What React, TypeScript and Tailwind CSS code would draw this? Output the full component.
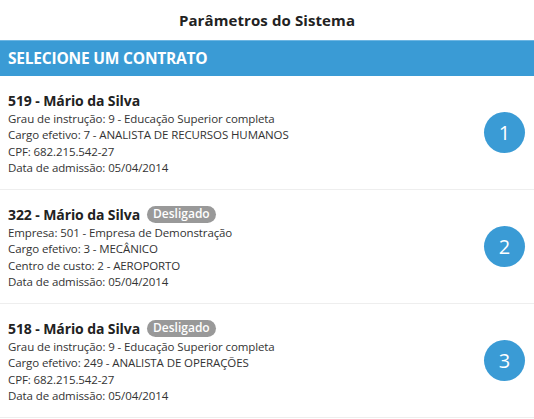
import React from "react";

const font = { fontFamily: '"Open Sans", "Noto Sans", sans-serif' };

type Item = { id: string; off?: boolean; lines: string[]; n: number };

const items: Item[] = [
  {
    id: "519",
    n: 1,
    lines: [
      "Grau de instrução: 9 - Educação Superior completa",
      "Cargo efetivo: 7 - ANALISTA DE RECURSOS HUMANOS",
      "CPF: 682.215.542-27",
      "Data de admissão: 05/04/2014",
    ],
  },
  {
    id: "322",
    n: 2,
    off: true,
    lines: [
      "Empresa: 501 - Empresa de Demonstração",
      "Cargo efetivo: 3 - MECÂNICO",
      "Centro de custo: 2 - AEROPORTO",
      "Data de admissão: 05/04/2014",
    ],
  },
  {
    id: "518",
    n: 3,
    off: true,
    lines: [
      "Grau de instrução: 9 - Educação Superior completa",
      "Cargo efetivo: 249 - ANALISTA DE OPERAÇÕES",
      "CPF: 682.215.542-27",
      "Data de admissão: 05/04/2014",
    ],
  },
];

export default function App() {
  return (
    <div className="w-[534px] h-[419px] bg-white overflow-hidden text-[#333]" style={font}>
      <div className="h-[40px] flex items-center justify-center text-[15px] font-bold text-[#222] tracking-[0.1px]">
        Parâmetros do Sistema
      </div>
      <div className="h-[36px] bg-[#3a9bd5] border-t border-[#6db6e3] flex items-center px-2 text-white font-bold text-[15.5px] tracking-[-0.2px]">
        SELECIONE UM CONTRATO
      </div>
      <div className="flex flex-col">
        {items.map((it) => (
          <div
            key={it.id}
            className="flex items-center justify-between pl-2 pr-[9px] h-[114px] border-b border-[#eeeeee]"
          >
            <div className="flex flex-col self-start pt-[13px]">
              <div className="flex items-center gap-[7px] h-[22px]">
                <span className="text-[14px] font-bold text-[#222] tracking-[-0.1px]">
                  {it.id} - Mário da Silva
                </span>
                {it.off && (
                  <span className="bg-[#999999] text-white text-[12px] font-semibold rounded-full px-[6px] h-[17px] flex items-center leading-none">
                    Desligado
                  </span>
                )}
              </div>
              {it.lines.map((l) => (
                <div key={l} className="text-[11.5px] leading-[16.3px] text-[#333] tracking-[-0.1px]">
                  {l}
                </div>
              ))}
            </div>
            <div className="w-[41px] h-[41px] rounded-full bg-[#3a9bd5] text-white text-[20px] flex items-center justify-center">
              {it.n}
            </div>
          </div>
        ))}
      </div>
    </div>
  );
}
